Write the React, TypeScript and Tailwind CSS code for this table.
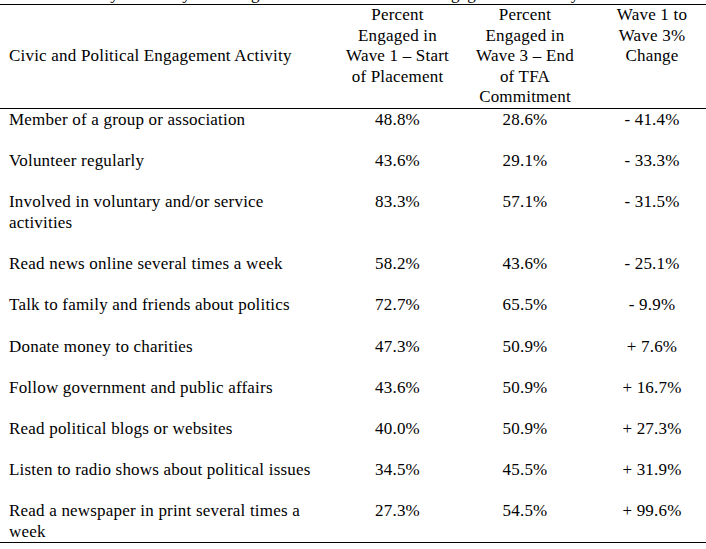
import React from "react";

type Row = { label: string[]; w1: string; w3: string; ch: string };

const rows: Row[] = [
  { label: ["Member of a group or association"], w1: "48.8%", w3: "28.6%", ch: "- 41.4%" },
  { label: ["Volunteer regularly"], w1: "43.6%", w3: "29.1%", ch: "- 33.3%" },
  { label: ["Involved in voluntary and/or service", "activities"], w1: "83.3%", w3: "57.1%", ch: "- 31.5%" },
  { label: ["Read news online several times a week"], w1: "58.2%", w3: "43.6%", ch: "- 25.1%" },
  { label: ["Talk to family and friends about politics"], w1: "72.7%", w3: "65.5%", ch: "- 9.9%" },
  { label: ["Donate money to charities"], w1: "47.3%", w3: "50.9%", ch: "+ 7.6%" },
  { label: ["Follow government and public affairs"], w1: "43.6%", w3: "50.9%", ch: "+ 16.7%" },
  { label: ["Read political blogs or websites"], w1: "40.0%", w3: "50.9%", ch: "+ 27.3%" },
  { label: ["Listen to radio shows about political issues"], w1: "34.5%", w3: "45.5%", ch: "+ 31.9%" },
  { label: ["Read a newspaper in print several times a", "week"], w1: "27.3%", w3: "54.5%", ch: "+ 99.6%" },
];

export default function App() {
  return (
    <div
      className="w-[706px] h-[549px] overflow-hidden bg-white text-black text-[17px] tracking-[0.2px] leading-[20.6px]"
      style={{ fontFamily: '"Liberation Serif", "Times New Roman", serif' }}
    >
      <div className="w-[717px]">
        <div className="h-[20px] -mt-[16px] leading-[20px] whitespace-nowrap pl-[9px]">
          Table 3. Survey Summary of Changes in Civic and Political Engagement Activity
        </div>
        <div className="border-t border-black w-[706px]" />
        <div className="grid grid-cols-[332px_131px_124px_130px] h-[103px]">
          <div className="flex items-center pl-[9px]">Civic and Political Engagement Activity</div>
          <div className="text-center">
            Percent
            <br />
            Engaged in
            <br />
            Wave 1 – Start
            <br />
            of Placement
          </div>
          <div className="text-center">
            Percent
            <br />
            Engaged in
            <br />
            Wave 3 – End
            <br />
            of TFA
            <br />
            Commitment
          </div>
          <div className="text-center">
            Wave 1 to
            <br />
            Wave 3%
            <br />
            Change
          </div>
        </div>
        <div className="border-t border-black w-[706px] mb-[1px]" />
        {rows.map((r, i) => (
          <div
            key={i}
            className={
              i === rows.length - 1
                ? "grid grid-cols-[332px_131px_124px_130px]"
                : "grid grid-cols-[332px_131px_124px_130px] pb-[20.6px]"
            }
          >
            <div className="pl-[9px]">
              {r.label.map((l, j) => (
                <div key={j}>{l}</div>
              ))}
            </div>
            <div className="text-center">{r.w1}</div>
            <div className="text-center">{r.w3}</div>
            <div className="text-center">{r.ch}</div>
          </div>
        ))}
        <div className="border-t border-black w-[706px]" />
      </div>
    </div>
  );
}
